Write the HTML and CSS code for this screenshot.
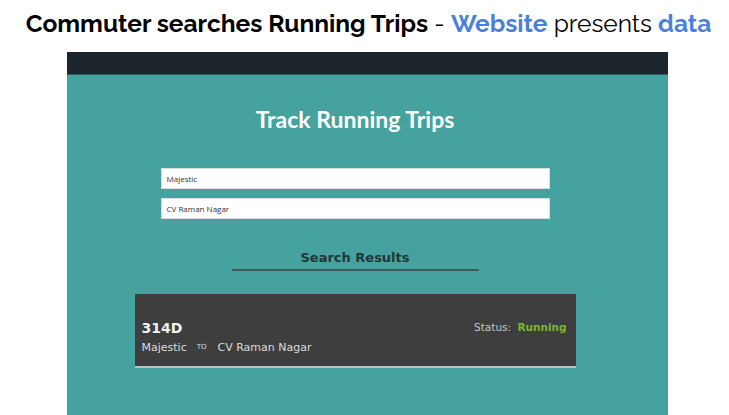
FILE: index.html
```html
<!DOCTYPE html>
<html>
<head>
<meta charset="utf-8">
<link rel="stylesheet" href="styles.css">
</head>
<body>
<h1 class="caption"><b>Commuter searches Running Trips</b> - <b class="blue">Website</b> presents <b class="blue">data</b></h1>
<div class="shot">
  <div class="topbar"></div>
  <div class="app">
    <div class="col">
      <h2 class="title">Track Running Trips</h2>
      <div class="field">Majestic</div>
      <div class="field">CV Raman Nagar</div>
      <div class="results-head">Search Results</div>
      <div class="card">
        <div class="card-left">
          <div class="route-no">314D</div>
          <div class="route"><span class="stop">Majestic</span><span class="to">TO</span><span class="stop">CV Raman Nagar</span></div>
        </div>
        <div class="status">Status: <span class="running">Running</span></div>
      </div>
    </div>
  </div>
</div>
</body>
</html>
```
FILE: styles.css
```css
html, body {
  margin: 0;
  padding: 0;
  background: #ffffff;
  width: 729px;
  height: 415px;
  overflow: hidden;
}
.caption {
  margin: 0;
  height: 52px;
  box-sizing: border-box;
  padding-top: 10px;
  text-align: center;
  font-family: "Raleway", "Open Sans", "Noto Sans", sans-serif;
  font-size: 24.5px;
  font-weight: 400;
  color: #000;
  line-height: 28px;
  white-space: nowrap;
  padding-left: 8px;
}
.caption b { font-weight: 700; }
.caption .blue { color: #4b7fd9; }
.shot {
  margin-left: 67px;
  width: 601px;
  height: 363px;
  display: flex;
  flex-direction: column;
}
.topbar {
  height: 22px;
  background: #1b252b;
  border-bottom: 1px solid #2f5d5c;
}
.app {
  flex: 1;
  background: #46a29e;
  padding-right: 25px;
}
.col {
  display: flex;
  flex-direction: column;
  align-items: center;
}
.title {
  margin: 30px 0 0;
  height: 28px;
  font-family: "Lato", "Open Sans", sans-serif;
  font-weight: 700;
  font-size: 23px;
  line-height: 28px;
  color: #ffffff;
}
.field {
  box-sizing: border-box;
  width: 389px;
  height: 21px;
  background: #fff;
  border: 1px solid #d8dede;
  font-family: "Open Sans", "Noto Sans", sans-serif;
  font-size: 8px;
  line-height: 19px;
  padding-left: 5px;
  color: #333;
}
.field:first-of-type { margin-top: 35px; }
.field + .field { margin-top: 9px; }
.results-head {
  margin-top: 31px;
  width: 247px;
  text-align: center;
  font-family: "DejaVu Sans", sans-serif;
  font-weight: 700;
  font-size: 13px;
  line-height: 16px;
  color: #1e3838;
  padding-bottom: 3px;
  border-bottom: 2px solid #3f5a5a;
}
.card {
  margin-top: 23px;
  box-sizing: border-box;
  width: 441px;
  height: 74px;
  background: #3e3e3e;
  border-bottom: 2px solid #b9c4c4;
  display: flex;
  justify-content: space-between;
  align-items: flex-start;
  padding: 26px 9px 0 7px;
  font-family: "DejaVu Sans", sans-serif;
}
.route-no {
  font-weight: 700;
  font-size: 14px;
  line-height: 17px;
  color: #f2f2f2;
}
.route {
  margin-top: 4px;
  display: flex;
  align-items: baseline;
  color: #dcdcdc;
  font-size: 11px;
  line-height: 14px;
}
.to {
  font-size: 7px;
  margin: 0 11px 0 10px;
  position: relative;
  top: -2px;
}
.status {
  margin-top: 0px;
  font-size: 10.5px;
  line-height: 14px;
  color: #c4c4c4;
}
.running {
  margin-left: 3px;
  font-weight: 700;
  color: #7cb530;
}
```
